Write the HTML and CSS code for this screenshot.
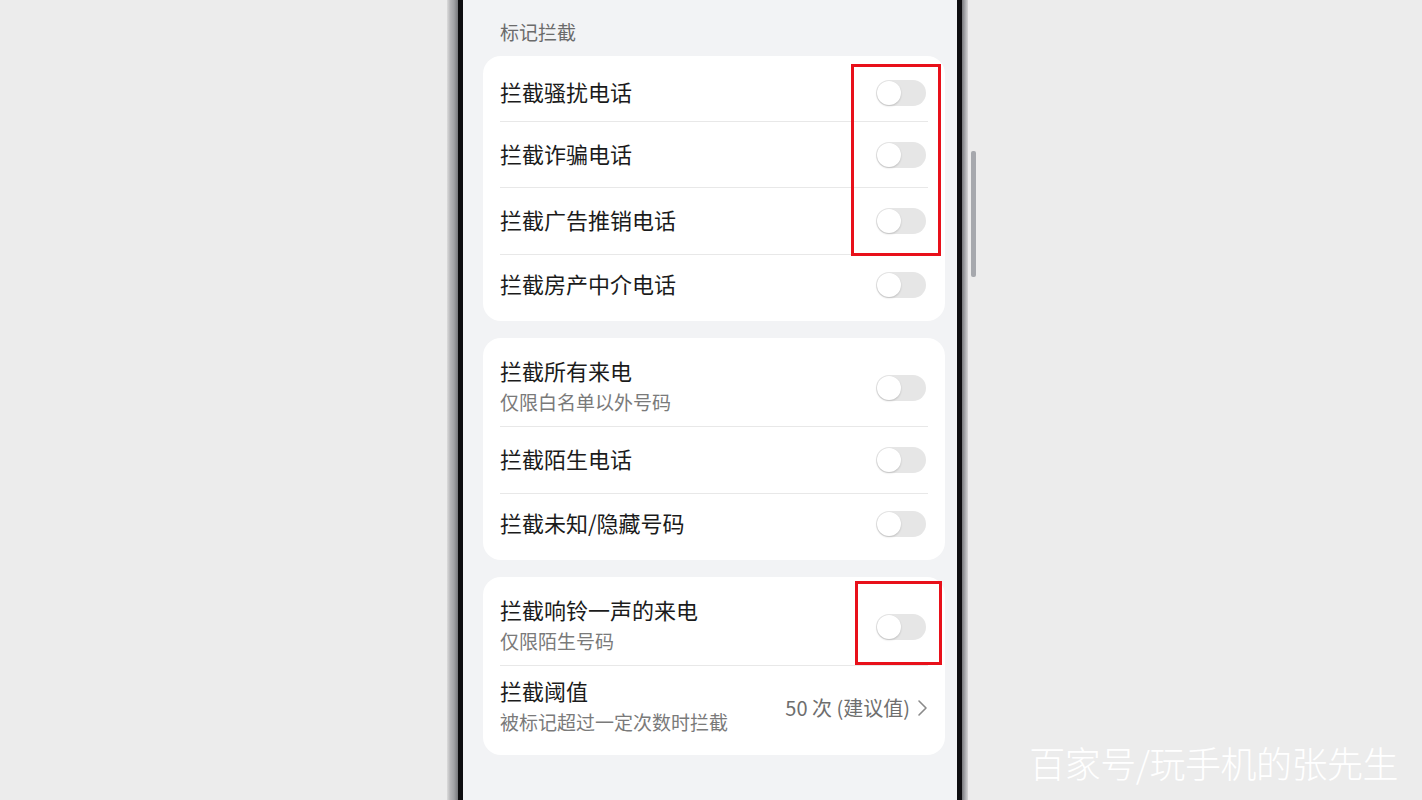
FILE: index.html
```html
<!doctype html>
<html lang="zh-CN">
<head>
    <meta charset="UTF-8">
    <meta name="viewport" content="width=device-width, initial-scale=1.0">
    <title>标记拦截</title>
    <link rel="stylesheet" href="styles.css">
</head>
<body>

    <div class="stage">

        <div class="phone">
            <div class="bezel">
                <div class="screen">

                    <div class="section-title">标记拦截</div>

                    <div class="card">
                        <div class="row">
                            <span class="label">拦截骚扰电话</span>
                            <span class="switch"></span>
                        </div>
                        <div class="row">
                            <span class="label">拦截诈骗电话</span>
                            <span class="switch"></span>
                        </div>
                        <div class="row tall">
                            <span class="label">拦截广告推销电话</span>
                            <span class="switch"></span>
                        </div>
                        <div class="row">
                            <span class="label">拦截房产中介电话</span>
                            <span class="switch"></span>
                        </div>
                    </div>

                    <div class="card">
                        <div class="row two">
                            <div class="text">
                                <div class="label">拦截所有来电</div>
                                <div class="sub">仅限白名单以外号码</div>
                            </div>
                            <span class="switch"></span>
                        </div>
                        <div class="row tall">
                            <span class="label">拦截陌生电话</span>
                            <span class="switch"></span>
                        </div>
                        <div class="row">
                            <span class="label">拦截未知/隐藏号码</span>
                            <span class="switch"></span>
                        </div>
                    </div>

                    <div class="card">
                        <div class="row two">
                            <div class="text">
                                <div class="label">拦截响铃一声的来电</div>
                                <div class="sub">仅限陌生号码</div>
                            </div>
                            <span class="switch"></span>
                        </div>
                        <div class="row two">
                            <div class="text">
                                <div class="label">拦截阈值</div>
                                <div class="sub">被标记超过一定次数时拦截</div>
                            </div>
                            <div class="value">
                                <span>50 次 (建议值)</span>
                                <svg width="12" height="18" viewBox="0 0 12 18">
                                    <polyline points="3,2 10,9 3,16" fill="none" stroke="#8a8a8a" stroke-width="1.6" stroke-linecap="round" stroke-linejoin="round"/>
                                </svg>
                            </div>
                        </div>
                    </div>

                </div>
            </div>
            <span class="side-key"></span>
        </div>

        <!-- red marks on the screenshot -->
        <div class="mark mark-top"></div>
        <div class="mark mark-bottom"></div>

        <div class="watermark">百家号/玩手机的张先生</div>
    </div>

</body>
</html>
```

FILE: styles.css
```css
html, body {
    margin: 0;
    padding: 0;
}
body {
    background-color: #ececec;
    font-family: "Noto Sans CJK SC", "Noto Sans", sans-serif;
    overflow: hidden;
}
.stage {
    position: relative;
    width: 1422px;
    height: 800px;
    display: flex;
    padding-left: 447px;
    box-sizing: border-box;
}
.phone {
    position: relative;
    display: flex;
    height: 800px;
    padding: 0 6px 0 11px;
    background: linear-gradient(to right, #dcdcdc 0, #b9b9bb 3px, #a2a3a6 7px, #77787b 11px, #77787b calc(100% - 6px), #a8a9ac calc(100% - 3px), #d6d6d6 100%);
}
.bezel {
    padding: 0 5px;
    background-color: #0e0e10;
}
.screen {
    width: 494px;
    height: 800px;
    box-sizing: border-box;
    padding: 0 12px 0 20px;
    background-color: #f2f3f5;
}
.side-key {
    position: absolute;
    right: -8px;
    top: 151px;
    width: 5px;
    height: 126px;
    border-radius: 2px;
    background-color: #a6a8ad;
}
.section-title {
    padding: 18px 0 0 17px;
    height: 28px;
    line-height: 28px;
    margin-bottom: 10px;
    font-size: 19px;
    color: #6b6b6b;
}
.card {
    background-color: #fff;
    border-radius: 18px;
    margin-bottom: 17px;
}
.row {
    height: 66px;
    box-sizing: border-box;
    margin: 0 17px;
    display: flex;
    align-items: center;
    justify-content: space-between;
    border-bottom: 1px solid #e8e8e8;
}
.row.tall {
    height: 67px;
}
.row.two {
    height: 89px;
}
.row:first-child {
    padding-top: 8px;
}
.row.two:first-child {
    padding-top: 12px;
}
.row:last-child {
    border-bottom: none;
    padding-bottom: 6px;
}
.row > .label,
.row > .text {
    margin-bottom: 4px;
}
.label {
    font-size: 22px;
    line-height: 30px;
    color: #1b1b1b;
}
.sub {
    margin-top: 2px;
    font-size: 19px;
    line-height: 30px;
    color: #7a7a7a;
}
.switch {
    position: relative;
    width: 50px;
    height: 26px;
    margin-right: 2px;
    border-radius: 13px;
    background-color: #e6e6e6;
}
.switch::after {
    content: "";
    position: absolute;
    left: 1px;
    top: 1px;
    width: 24px;
    height: 24px;
    border-radius: 50%;
    background-color: #fff;
    box-shadow: 0 1px 2px rgba(0, 0, 0, 0.18);
}
.value {
    display: flex;
    align-items: center;
    gap: 6px;
    font-size: 20px;
    color: #6e6e6e;
}
.value svg {
    display: block;
}
.mark {
    position: absolute;
    border: 3px solid #e8101a;
    box-sizing: border-box;
}
.mark-top {
    left: 851px;
    top: 64px;
    width: 90px;
    height: 192px;
}
.mark-bottom {
    left: 855px;
    top: 581px;
    width: 87px;
    height: 84px;
}
.watermark {
    position: absolute;
    right: 24px;
    top: 739px;
    font-size: 36px;
    font-weight: 300;
    line-height: 46px;
    color: #fff;
    letter-spacing: -0.5px;
}
```
